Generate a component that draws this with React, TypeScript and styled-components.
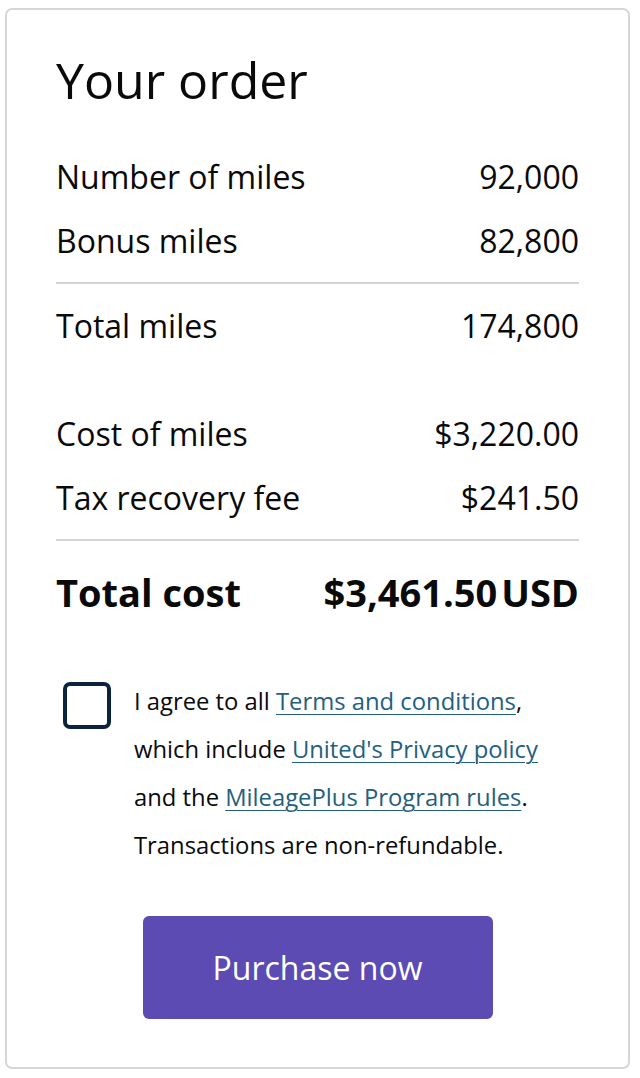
import React from 'react';
import styled, {createGlobalStyle} from 'styled-components';

const GlobalStyle = createGlobalStyle`
  html, body {
    margin: 0;
    padding: 0;
    background: #ffffff;
  }
  body {
    font-family: "Open Sans", "Noto Sans", "Liberation Sans", sans-serif;
    color: #111111;
  }
`;

const Page = styled.div`
  padding: 8px 10px 8px 5px;
`;

const Card = styled.section`
  box-sizing: border-box;
  width: 625px;
  min-height: 1061px;
  border: 2px solid #d6d6d6;
  border-radius: 7px;
  padding: 40px 49px 47px 49px;
`;

const Title = styled.h1`
  margin: 0 0 34px 0;
  font-size: 50px;
  line-height: 60px;
  font-weight: 500;
  color: #0a0a0a;
`;

const Row = styled.div<{$bold?: boolean}>`
  display: flex;
  justify-content: space-between;
  align-items: center;
  height: 64px;
  padding-top: ${(p) => (p.$bold ? '10px' : '0')};
  font-size: ${(p) => (p.$bold ? '38px' : '32px')};
  font-weight: ${(p) => (p.$bold ? 700 : 400)};
  color: #0a0a0a;
`;

const Divider = styled.hr`
  margin: 10px 0 9px 0;
  border: none;
  height: 2px;
  background: #d4d4d4;
`;

const Spacer = styled.div`
  height: 44px;
`;

const Currency = styled.span`
  margin-left: 4px;
`;

const Agreement = styled.label`
  display: flex;
  align-items: flex-start;
  gap: 23px;
  margin: 53px 0 0 7px;
  cursor: pointer;
`;

const Box = styled.span`
  flex: none;
  box-sizing: border-box;
  width: 48px;
  height: 47px;
  margin-top: 5px;
  border: 4px solid #0c2340;
  border-radius: 7px;
`;

const Terms = styled.p`
  margin: 0;
  font-size: 23.8px;
  line-height: 48px;
  color: #0a0a0a;
`;

const Link = styled.a`
  color: #23607e;
  text-decoration: underline;
  text-underline-offset: 4px;
  text-decoration-thickness: 1px;
`;

const Actions = styled.div`
  display: flex;
  justify-content: center;
  margin-top: 47px;
`;

const PurchaseButton = styled.button`
  width: 350px;
  height: 103px;
  border: none;
  border-radius: 6px;
  background: #5b4bb3;
  color: #ffffff;
  font-family: inherit;
  font-size: 32px;
  cursor: pointer;
`;

export default function App() {
    return (
        <Page>
            <GlobalStyle/>
            <Card>
                <Title>Your order</Title>
                <Row><span>Number of miles</span><span>92,000</span></Row>
                <Row><span>Bonus miles</span><span>82,800</span></Row>
                <Divider/>
                <Row><span>Total miles</span><span>174,800</span></Row>
                <Spacer/>
                <Row><span>Cost of miles</span><span>$3,220.00</span></Row>
                <Row><span>Tax recovery fee</span><span>$241.50</span></Row>
                <Divider/>
                <Row $bold><span>Total cost</span><span>$3,461.50<Currency>USD</Currency></span></Row>

                <Agreement>
                    <Box/>
                    <Terms>
                        I agree to all <Link href="#">Terms and conditions</Link>,<br/>
                        which include <Link href="#">United's Privacy policy</Link><br/>
                        and the <Link href="#">MileagePlus Program rules</Link>.<br/>
                        Transactions are non-refundable.
                    </Terms>
                </Agreement>

                <Actions>
                    <PurchaseButton type="button">Purchase now</PurchaseButton>
                </Actions>
            </Card>
        </Page>
    );
}
